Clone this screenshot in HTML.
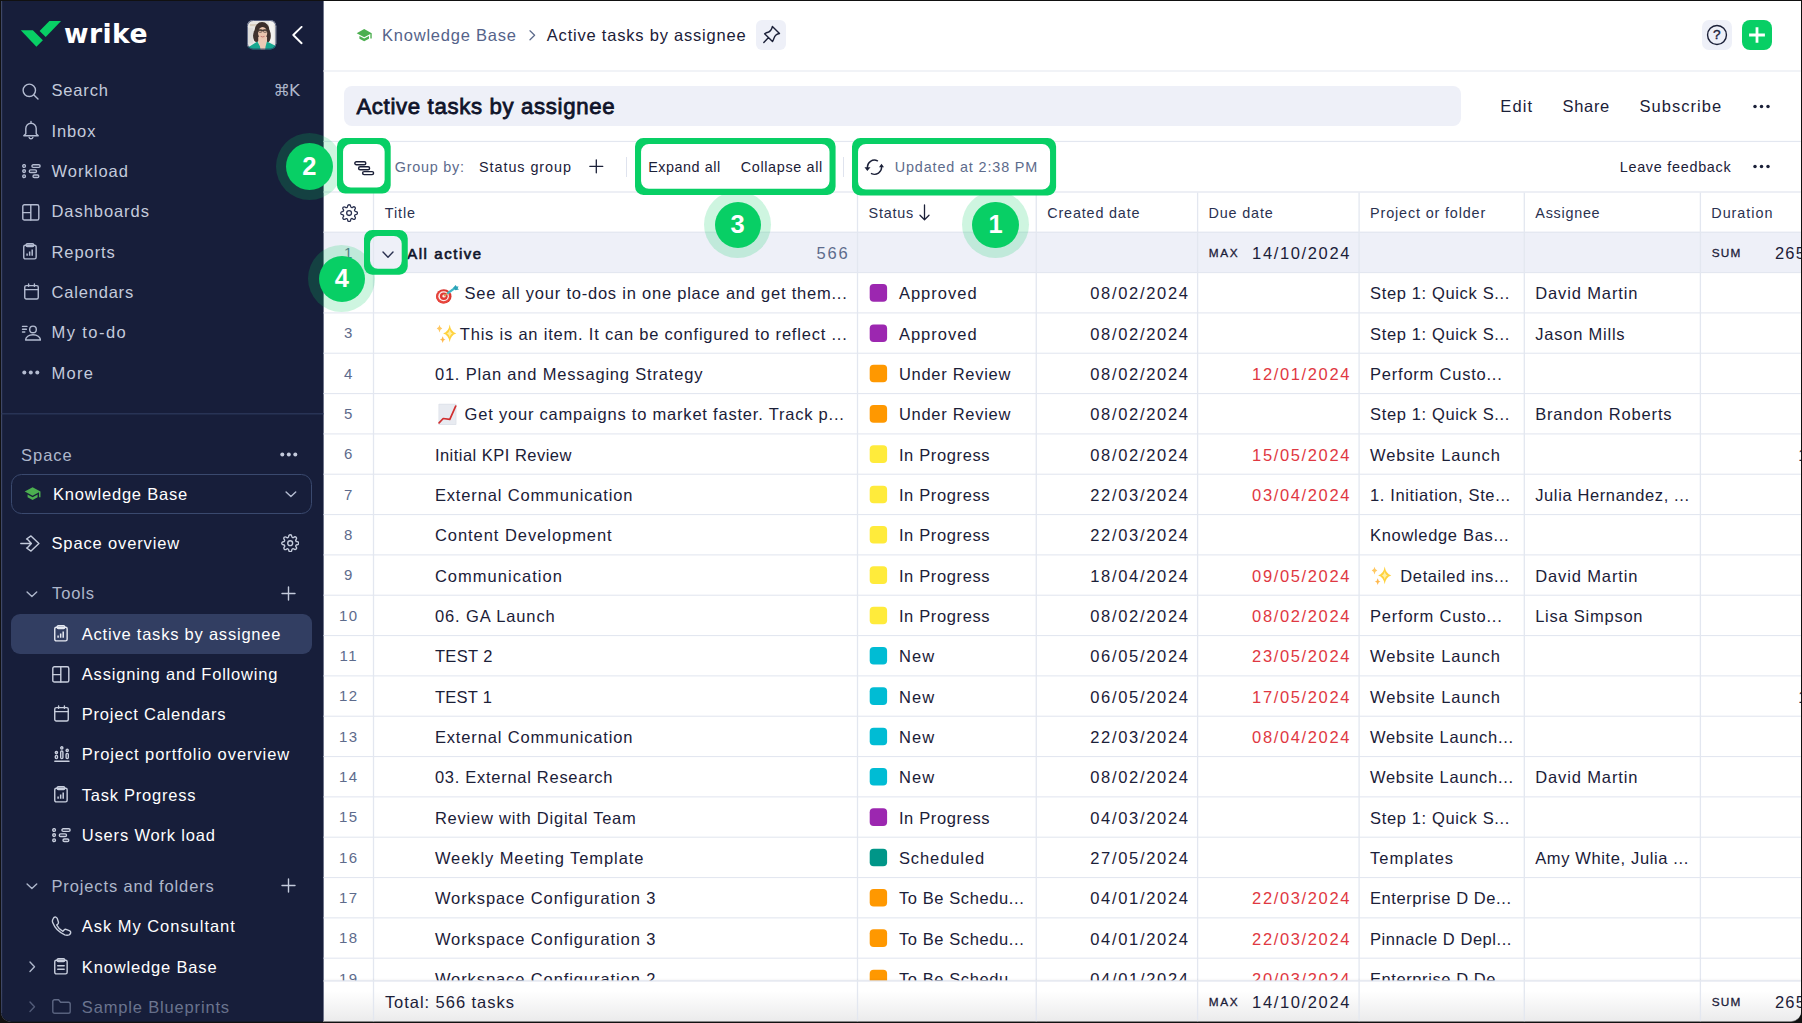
<!DOCTYPE html>
<html lang="en"><head><meta charset="utf-8"><title>Active tasks by assignee - Wrike</title>
<style>
html,body{margin:0;padding:0;background:#111;overflow:hidden}
body{width:1802px;height:1023px}
#app{width:1802px;height:1023px;position:relative;overflow:hidden;font-family:"Liberation Sans",sans-serif}
.b{position:absolute;display:block}
.t{position:absolute;display:block;white-space:pre;font-family:"Liberation Sans",sans-serif}
</style></head>
<body>
<div id="app">
<div class="b" style="left:0.00px;top:0.00px;width:1802.00px;height:1023.00px;background:#111;"></div>
<div class="b" style="left:1.20px;top:1.00px;width:1799.60px;height:1021.00px;background:#8a8a8b;border-radius:0 0 10px 10px;"></div>
<div class="b" style="left:1.20px;top:1.00px;width:1799.60px;height:1020.00px;background:#fff;border-radius:0 0 10px 10px;"></div>
<div class="b" style="left:1.20px;top:1.00px;width:322.30px;height:1021.00px;background:#141a2c;border-radius:0 0 0 10px;"></div>
<div class="b" style="left:1.20px;top:1.00px;width:322.30px;height:1020.00px;background:#171e3a;border-radius:0 0 0 10px;"></div>
<div class="b" style="left:323.00px;top:1.00px;width:1.00px;height:1020.00px;background:#70768b;"></div>
<div class="b" style="left:1.00px;top:1.00px;width:1.00px;height:1012.00px;background:#3e4766;"></div>
<div class="b" style="left:2.00px;top:1.00px;width:1.00px;height:1012.00px;background:#1d2542;"></div>
<svg class="b" style="left:20.00px;top:20.00px;" width="42" height="27" viewBox="0 0 42 27" fill="none"><path d="M0.800 10.200H12.900L22.900 20.200 16.400 26.700z" fill="#08cf65"/><path d="M29.400 1.100H41.100L25.700 17 19.600 10.900z" fill="#08cf65"/></svg>
<span id="t1" class="t" style="top:16.90px;height:34px;line-height:34px;font-size:26.6px;color:#fff;font-weight:700;left:63.90px;letter-spacing:0.454px;font-family:'DejaVu Sans','Liberation Sans',sans-serif;">wrike</span>
<svg class="b" style="left:247.4px;top:20.2px" width="29.300" height="29.500" viewBox="0 0 30 30"><defs><clipPath id="av"><rect x="0" y="0" width="30" height="30" rx="6.200"/></clipPath><filter id="avb" x="-5%" y="-5%" width="110%" height="110%"><feGaussianBlur stdDeviation="0.550"/></filter></defs><g clip-path="url(#av)"><g filter="url(#avb)"><rect x="-4" y="-4" width="38" height="42" fill="#e9e7e3"/><rect x="3" y="4" width="7" height="2.200" fill="#d9cfbf"/><rect x="21" y="5" width="7" height="2.200" fill="#d9cfbf"/><rect x="22.500" y="-1" width="5" height="24" fill="#f4f3f1"/><rect x="1" y="8" width="5" height="16" fill="#dddcda"/><ellipse cx="15.400" cy="10.500" rx="7.600" ry="8.600" fill="#3b2f2a"/><ellipse cx="9.800" cy="16" rx="3.600" ry="6.500" fill="#40332d"/><ellipse cx="21" cy="16" rx="3.400" ry="6.800" fill="#40332d"/><rect x="11.500" y="17" width="9" height="20" fill="#ecc9b4"/><ellipse cx="16" cy="13.200" rx="4.700" ry="6.200" fill="#ecc6ae"/><path d="M-3 37V29.500L3 26.800 10.600 22 13.300 27 14.800 37zM17.800 37 19 27 20.400 22 27 25.300 33 28V37z" fill="#12a78f"/><path d="M11.500 10.400h9.200" stroke="#3a302c" stroke-width="1.100"/><rect x="11.700" y="9.800" width="3.600" height="2.600" rx="0.800" stroke="#3a302c" stroke-width=".7" fill="none"/><rect x="16.700" y="9.800" width="3.600" height="2.600" rx="0.800" stroke="#3a302c" stroke-width=".7" fill="none"/><path d="M14 16.600q2 1.300 4 0" stroke="#c4736e" stroke-width=".9" fill="none"/></g></g><rect x="0.400" y="0.400" width="29.200" height="29.200" rx="6" fill="none" stroke="#2d3a63" stroke-width=".8"/></svg>
<svg class="b" style="left:291.00px;top:26.00px;" width="12" height="19" viewBox="0 0 12 19" fill="none"><path d="M10.600 0.900 2.300 9.050 10.600 17.200" stroke="#fff" stroke-width="1.900" stroke-linecap="round" stroke-linejoin="round"/></svg>
<svg class="b" style="left:21.50px;top:82.50px;" width="18" height="18" viewBox="0 0 18 18" fill="none"><circle cx="7.300" cy="7.300" r="6.200" stroke="#b4bcd1" stroke-width="1.4" stroke-linecap="round" stroke-linejoin="round"/><path d="M11.900 11.900 16 16" stroke="#b4bcd1" stroke-width="1.4" stroke-linecap="round" stroke-linejoin="round"/></svg>
<span id="t2" class="t" style="top:78.30px;height:24px;line-height:24px;font-size:16.5px;color:#c4cbdc;left:51.50px;letter-spacing:0.829px;">Search</span>
<svg class="b" style="left:22.00px;top:120.30px;" width="18" height="20" viewBox="0 0 18 20" fill="none"><path d="M9 1.400v1.300M3.800 13.800V8.400a5.200 5.200 0 0 1 10.400 0v5.400l2 2H1.800z" stroke="#b4bcd1" stroke-width="1.4" stroke-linecap="round" stroke-linejoin="round"/><path d="M7.100 17.400a2 2 0 0 0 3.800 0" stroke="#b4bcd1" stroke-width="1.4" stroke-linecap="round" stroke-linejoin="round"/></svg>
<span id="t3" class="t" style="top:118.63px;height:24px;line-height:24px;font-size:16.5px;color:#c4cbdc;left:51.50px;letter-spacing:0.888px;">Inbox</span>
<svg class="b" style="left:21.90px;top:163.50px;" width="19" height="15" viewBox="0 0 19 15" fill="none"><circle cx="2.100" cy="2" r="1.350" stroke="#b4bcd1" stroke-width="1.4" stroke-linecap="round" stroke-linejoin="round"/><circle cx="2.100" cy="7.100" r="1.350" stroke="#b4bcd1" stroke-width="1.4" stroke-linecap="round" stroke-linejoin="round"/><circle cx="2.100" cy="12.200" r="1.350" stroke="#b4bcd1" stroke-width="1.4" stroke-linecap="round" stroke-linejoin="round"/><rect x="9.900" y="0.750" width="8.200" height="2.600" rx="1.300" stroke="#b4bcd1" stroke-width="1.4" stroke-linecap="round" stroke-linejoin="round"/><rect x="7.300" y="5.850" width="7.200" height="2.600" rx="1.300" stroke="#b4bcd1" stroke-width="1.4" stroke-linecap="round" stroke-linejoin="round"/><rect x="11" y="10.950" width="5.800" height="2.600" rx="1.300" stroke="#b4bcd1" stroke-width="1.4" stroke-linecap="round" stroke-linejoin="round"/></svg>
<span id="t4" class="t" style="top:158.96px;height:24px;line-height:24px;font-size:16.5px;color:#c4cbdc;left:51.50px;letter-spacing:1.003px;">Workload</span>
<svg class="b" style="left:21.50px;top:203.70px;" width="18" height="17" viewBox="0 0 18 17" fill="none"><rect x="0.8" y="0.8" width="16" height="15.2" rx="1.6" stroke="#b4bcd1" stroke-width="1.4" stroke-linecap="round" stroke-linejoin="round"/><path d="M8.8 0.8V16M0.8 8.6H8.8" stroke="#b4bcd1" stroke-width="1.4" stroke-linecap="round" stroke-linejoin="round"/></svg>
<span id="t5" class="t" style="top:199.29px;height:24px;line-height:24px;font-size:16.5px;color:#c4cbdc;left:51.50px;letter-spacing:0.938px;">Dashboards</span>
<svg class="b" style="left:23.40px;top:243.00px;" width="15" height="18" viewBox="0 0 15 18" fill="none"><rect x="0.750" y="2.200" width="12.400" height="13.700" rx="1.600" stroke="#b4bcd1" stroke-width="1.4" stroke-linecap="round" stroke-linejoin="round"/><rect x="3.200" y="0.750" width="7.500" height="2.800" rx="1.100" stroke="#b4bcd1" stroke-width="1.4" stroke-linecap="round" stroke-linejoin="round"/><path d="M4.100 12.700V10.600M6.650 12.700V8.600M9.200 12.700V6.600" stroke="#b4bcd1" stroke-width="1.500"/></svg>
<span id="t6" class="t" style="top:239.62px;height:24px;line-height:24px;font-size:16.5px;color:#c4cbdc;left:51.50px;letter-spacing:0.924px;">Reports</span>
<svg class="b" style="left:23.50px;top:282.90px;" width="16" height="18" viewBox="0 0 16 18" fill="none"><rect x="0.750" y="2.600" width="13.500" height="13.400" rx="1.500" stroke="#b4bcd1" stroke-width="1.4" stroke-linecap="round" stroke-linejoin="round"/><path d="M0.750 6.600H14.250M4.600 0.900V3.300M10.400 0.900V3.300" stroke="#b4bcd1" stroke-width="1.4" stroke-linecap="round" stroke-linejoin="round"/></svg>
<span id="t7" class="t" style="top:279.95px;height:24px;line-height:24px;font-size:16.5px;color:#c4cbdc;left:51.50px;letter-spacing:0.807px;">Calendars</span>
<svg class="b" style="left:21.30px;top:324.60px;" width="20" height="16" viewBox="0 0 20 16" fill="none"><path d="M1.500 1.400H6M1.500 4.200H5.400M1.500 7H3.800" stroke="#b4bcd1" stroke-width="1.4" stroke-linecap="round" stroke-linejoin="round"/><circle cx="12" cy="4.4" r="3.3" stroke="#b4bcd1" stroke-width="1.4" stroke-linecap="round" stroke-linejoin="round"/><path d="M4.6 15c0-3 3.3-5.2 7.4-5.2s7.4 2.2 7.4 5.2z" stroke="#b4bcd1" stroke-width="1.4" stroke-linecap="round" stroke-linejoin="round"/></svg>
<span id="t8" class="t" style="top:320.28px;height:24px;line-height:24px;font-size:16.5px;color:#c4cbdc;left:51.50px;letter-spacing:1.427px;">My to-do</span>
<svg class="b" style="left:21.50px;top:369.70px;" width="18" height="5" viewBox="0 0 18 5" fill="none"><circle cx="2.3" cy="2.5" r="2" fill="#b4bcd1"/><circle cx="8.8" cy="2.5" r="2" fill="#b4bcd1"/><circle cx="15.3" cy="2.5" r="2" fill="#b4bcd1"/></svg>
<span id="t9" class="t" style="top:360.61px;height:24px;line-height:24px;font-size:16.5px;color:#c4cbdc;left:51.50px;letter-spacing:1.277px;">More</span>
<span id="t10" class="t" style="top:78.60px;height:24px;line-height:24px;font-size:16.5px;color:#aeb7cb;left:273.50px;letter-spacing:-0.903px;font-family:'DejaVu Sans','Liberation Sans',sans-serif;">⌘K</span>
<svg class="b" style="left:0;top:0" width="1802" height="1023" viewBox="0 0 1802 1023"><rect x="1.20" y="413.20" width="322.30" height="1.20" fill="#2d3a5d"/></svg>
<span id="t11" class="t" style="top:442.70px;height:24px;line-height:24px;font-size:16.5px;color:#aeb7cb;left:21.10px;letter-spacing:0.945px;">Space</span>
<svg class="b" style="left:280.00px;top:451.50px;" width="18" height="5" viewBox="0 0 18 5" fill="none"><circle cx="2.3" cy="2.5" r="2" fill="#c4cbdc"/><circle cx="8.8" cy="2.5" r="2" fill="#c4cbdc"/><circle cx="15.3" cy="2.5" r="2" fill="#c4cbdc"/></svg>
<div class="b" style="left:11px;top:474.1px;width:300.8px;height:39.6px;border:1px solid #3a496e;border-radius:10.5px;box-sizing:border-box"></div>
<svg class="b" style="left:23.90px;top:484.60px;" width="17.2" height="17.2" viewBox="0 0 24 24" fill="none"><path d="M5 13.200v4l7 3.800 7-3.800v-4l-7 3.800zM12 3 1 9l11 6 9-4.900V17h2V9z" fill="#4caf50"/></svg>
<span id="t12" class="t" style="top:481.90px;height:24px;line-height:24px;font-size:16.5px;color:#fff;left:53.00px;letter-spacing:0.799px;">Knowledge Base</span>
<svg class="b" style="left:284.70px;top:491.20px;" width="12" height="7" viewBox="0 0 12 7" fill="none"><path d="M1.100 0.900 5.900 5.500 10.700 0.900" stroke="#b4bcd1" stroke-width="1.4" stroke-linecap="round" stroke-linejoin="round"/></svg>
<svg class="b" style="left:20.30px;top:534.60px;" width="20" height="17" viewBox="0 0 20 17" fill="none"><path d="M0.8 8.5H11M7.6 4.6 11.4 8.5 7.6 12.4" stroke="#c4cbdc" stroke-width="1.4" stroke-linecap="round" stroke-linejoin="round"/><path d="M6.6 4 11 0.9 18.9 8.5 11 16.1 6.6 13" stroke="#c4cbdc" stroke-width="1.4" stroke-linecap="round" stroke-linejoin="round"/></svg>
<span id="t13" class="t" style="top:531.00px;height:24px;line-height:24px;font-size:16.5px;color:#fff;left:51.50px;letter-spacing:0.865px;">Space overview</span>
<svg class="b" style="left:280.80px;top:533.80px;" width="18.4" height="18.4" viewBox="0 0 24 24" fill="none"><circle cx="12" cy="12" r="3.200" stroke="#c4cbdc" stroke-width="1.8" stroke-linecap="round" stroke-linejoin="round"/><path d="M19.4 15a1.650 1.650 0 0 0 .33 1.820l.06.060a2 2 0 0 1 0 2.830 2 2 0 0 1-2.830 0l-.06-.060a1.650 1.650 0 0 0-1.820-.33 1.650 1.650 0 0 0-1 1.510V21a2 2 0 0 1-2 2 2 2 0 0 1-2-2v-.09A1.650 1.650 0 0 0 9 19.400a1.650 1.650 0 0 0-1.820.33l-.06.060a2 2 0 0 1-2.830 0 2 2 0 0 1 0-2.830l.06-.060a1.650 1.650 0 0 0 .33-1.820 1.650 1.650 0 0 0-1.510-1H3a2 2 0 0 1-2-2 2 2 0 0 1 2-2h.09A1.650 1.650 0 0 0 4.600 9a1.650 1.650 0 0 0-.33-1.820l-.06-.060a2 2 0 0 1 0-2.830 2 2 0 0 1 2.830 0l.06.060a1.650 1.650 0 0 0 1.820.33H9a1.650 1.650 0 0 0 1-1.510V3a2 2 0 0 1 2-2 2 2 0 0 1 2 2v.09a1.650 1.650 0 0 0 1 1.510 1.650 1.650 0 0 0 1.820-.33l.06-.060a2 2 0 0 1 2.830 0 2 2 0 0 1 0 2.830l-.06.060a1.650 1.650 0 0 0-.33 1.820V9a1.650 1.650 0 0 0 1.510 1H21a2 2 0 0 1 2 2 2 2 0 0 1-2 2h-.09a1.650 1.650 0 0 0-1.510 1z" stroke="#c4cbdc" stroke-width="1.8" stroke-linecap="round" stroke-linejoin="round"/></svg>
<svg class="b" style="left:25.60px;top:590.60px;" width="12" height="7" viewBox="0 0 12 7" fill="none"><path d="M1.100 0.900 5.900 5.500 10.700 0.900" stroke="#aeb7cb" stroke-width="1.4" stroke-linecap="round" stroke-linejoin="round"/></svg>
<span id="t14" class="t" style="top:581.20px;height:24px;line-height:24px;font-size:16.5px;color:#aeb7cb;left:52.00px;letter-spacing:0.886px;">Tools</span>
<svg class="b" style="left:281.00px;top:585.70px;" width="15" height="15" viewBox="0 0 15 15" fill="none"><path d="M7.500 1V14M1 7.500H14" stroke="#c4cbdc" stroke-width="1.4" stroke-linecap="round" stroke-linejoin="round"/></svg>
<div class="b" style="left:11.00px;top:613.75px;width:300.80px;height:40.00px;background:#323e62;border-radius:9px;"></div>
<svg class="b" style="left:54.10px;top:624.80px;" width="15" height="18" viewBox="0 0 15 18" fill="none"><rect x="0.750" y="2.200" width="12.400" height="13.700" rx="1.600" stroke="#e6e9f2" stroke-width="1.4" stroke-linecap="round" stroke-linejoin="round"/><rect x="3.200" y="0.750" width="7.500" height="2.800" rx="1.100" stroke="#e6e9f2" stroke-width="1.4" stroke-linecap="round" stroke-linejoin="round"/><path d="M4.100 12.700V10.600M6.650 12.700V8.600M9.200 12.700V6.600" stroke="#e6e9f2" stroke-width="1.500"/></svg>
<span id="t15" class="t" style="top:621.50px;height:24px;line-height:24px;font-size:16.5px;color:#fff;left:81.80px;letter-spacing:0.781px;">Active tasks by assignee</span>
<svg class="b" style="left:51.80px;top:665.53px;" width="18" height="17" viewBox="0 0 18 17" fill="none"><rect x="0.8" y="0.8" width="16" height="15.2" rx="1.6" stroke="#c9cfde" stroke-width="1.4" stroke-linecap="round" stroke-linejoin="round"/><path d="M8.8 0.8V16M0.8 8.6H8.8" stroke="#c9cfde" stroke-width="1.4" stroke-linecap="round" stroke-linejoin="round"/></svg>
<span id="t16" class="t" style="top:661.83px;height:24px;line-height:24px;font-size:16.5px;color:#fff;left:81.80px;letter-spacing:0.803px;">Assigning and Following</span>
<svg class="b" style="left:54.10px;top:705.16px;" width="16" height="18" viewBox="0 0 16 18" fill="none"><rect x="0.750" y="2.600" width="13.500" height="13.400" rx="1.500" stroke="#c9cfde" stroke-width="1.4" stroke-linecap="round" stroke-linejoin="round"/><path d="M0.750 6.600H14.250M4.600 0.900V3.300M10.400 0.900V3.300" stroke="#c9cfde" stroke-width="1.4" stroke-linecap="round" stroke-linejoin="round"/></svg>
<span id="t17" class="t" style="top:702.16px;height:24px;line-height:24px;font-size:16.5px;color:#fff;left:81.80px;letter-spacing:0.779px;">Project Calendars</span>
<svg class="b" style="left:54.00px;top:745.89px;" width="16" height="16" viewBox="0 0 16 16" fill="none"><circle cx="2.4" cy="6.6" r="1.1" stroke="#c9cfde" stroke-width="1.4" stroke-linecap="round" stroke-linejoin="round"/><circle cx="7.8" cy="1.9" r="1.1" stroke="#c9cfde" stroke-width="1.4" stroke-linecap="round" stroke-linejoin="round"/><circle cx="13.2" cy="4.4" r="1.1" stroke="#c9cfde" stroke-width="1.4" stroke-linecap="round" stroke-linejoin="round"/><rect x="1.3" y="9.4" width="2.2" height="3.2" rx="1" stroke="#c9cfde" stroke-width="1.4" stroke-linecap="round" stroke-linejoin="round"/><rect x="6.7" y="5" width="2.2" height="7.6" rx="1" stroke="#c9cfde" stroke-width="1.4" stroke-linecap="round" stroke-linejoin="round"/><rect x="12.1" y="7.4" width="2.2" height="5.2" rx="1" stroke="#c9cfde" stroke-width="1.4" stroke-linecap="round" stroke-linejoin="round"/><path d="M0.8 15.2H15" stroke="#c9cfde" stroke-width="1.4" stroke-linecap="round" stroke-linejoin="round"/></svg>
<span id="t18" class="t" style="top:742.49px;height:24px;line-height:24px;font-size:16.5px;color:#fff;left:81.80px;letter-spacing:0.922px;">Project portfolio overview</span>
<svg class="b" style="left:54.10px;top:786.12px;" width="15" height="18" viewBox="0 0 15 18" fill="none"><rect x="0.750" y="2.200" width="12.400" height="13.700" rx="1.600" stroke="#c9cfde" stroke-width="1.4" stroke-linecap="round" stroke-linejoin="round"/><rect x="3.200" y="0.750" width="7.500" height="2.800" rx="1.100" stroke="#c9cfde" stroke-width="1.4" stroke-linecap="round" stroke-linejoin="round"/><path d="M4.100 12.700V10.600M6.650 12.700V8.600M9.200 12.700V6.600" stroke="#c9cfde" stroke-width="1.500"/></svg>
<span id="t19" class="t" style="top:782.82px;height:24px;line-height:24px;font-size:16.5px;color:#fff;left:81.80px;letter-spacing:0.757px;">Task Progress</span>
<svg class="b" style="left:52.10px;top:827.80px;" width="19" height="15" viewBox="0 0 19 15" fill="none"><circle cx="2.100" cy="2" r="1.350" stroke="#c9cfde" stroke-width="1.4" stroke-linecap="round" stroke-linejoin="round"/><circle cx="2.100" cy="7.100" r="1.350" stroke="#c9cfde" stroke-width="1.4" stroke-linecap="round" stroke-linejoin="round"/><circle cx="2.100" cy="12.200" r="1.350" stroke="#c9cfde" stroke-width="1.4" stroke-linecap="round" stroke-linejoin="round"/><rect x="9.900" y="0.750" width="8.200" height="2.600" rx="1.300" stroke="#c9cfde" stroke-width="1.4" stroke-linecap="round" stroke-linejoin="round"/><rect x="7.300" y="5.850" width="7.200" height="2.600" rx="1.300" stroke="#c9cfde" stroke-width="1.4" stroke-linecap="round" stroke-linejoin="round"/><rect x="11" y="10.950" width="5.800" height="2.600" rx="1.300" stroke="#c9cfde" stroke-width="1.4" stroke-linecap="round" stroke-linejoin="round"/></svg>
<span id="t20" class="t" style="top:823.15px;height:24px;line-height:24px;font-size:16.5px;color:#fff;left:81.80px;letter-spacing:0.819px;">Users Work load</span>
<svg class="b" style="left:25.60px;top:883.00px;" width="12" height="7" viewBox="0 0 12 7" fill="none"><path d="M1.100 0.900 5.900 5.500 10.700 0.900" stroke="#aeb7cb" stroke-width="1.4" stroke-linecap="round" stroke-linejoin="round"/></svg>
<span id="t21" class="t" style="top:873.50px;height:24px;line-height:24px;font-size:16.5px;color:#aeb7cb;left:51.50px;letter-spacing:0.868px;">Projects and folders</span>
<svg class="b" style="left:281.00px;top:877.90px;" width="15" height="15" viewBox="0 0 15 15" fill="none"><path d="M7.500 1V14M1 7.500H14" stroke="#c4cbdc" stroke-width="1.4" stroke-linecap="round" stroke-linejoin="round"/></svg>
<svg class="b" style="left:50.70px;top:915.50px;" width="22" height="21" viewBox="0 0 22 21" fill="none"><path d="M2.2 2.6c.5-1 1.6-1.7 2.6-1.5.7.2 1.2.8 1.5 1.500l1.100 3.400c.2.700 0 1.400-.5 1.900l-1.200 1.100c1.300 2.700 3.400 4.900 6.200 6.300l1.200-1.400c.5-.5 1.200-.700 1.900-.5l3.300 1.200c.8.300 1.300.9 1.400 1.600.2 1.100-.6 2.100-1.600 2.600-1.300.6-2.800.5-4.300 0C8.400 16.600 3.600 11.600 1.700 6.600 1.200 5.200 1.400 3.800 2.200 2.600z" stroke="#c9cfde" stroke-width="1.4" stroke-linecap="round" stroke-linejoin="round"/></svg>
<span id="t22" class="t" style="top:913.90px;height:24px;line-height:24px;font-size:16.5px;color:#fff;left:81.80px;letter-spacing:0.966px;">Ask My Consultant</span>
<svg class="b" style="left:29.00px;top:960.80px;" width="7" height="12" viewBox="0 0 7 12" fill="none"><path d="M1 1.100 5.500 5.800 1 10.500" stroke="#aeb7cb" stroke-width="1.4" stroke-linecap="round" stroke-linejoin="round"/></svg>
<svg class="b" style="left:54.10px;top:957.80px;" width="15" height="18" viewBox="0 0 15 18" fill="none"><rect x="0.750" y="2.200" width="12.400" height="13.700" rx="1.600" stroke="#c9cfde" stroke-width="1.4" stroke-linecap="round" stroke-linejoin="round"/><rect x="3.200" y="0.750" width="7.500" height="2.800" rx="1.100" stroke="#c9cfde" stroke-width="1.4" stroke-linecap="round" stroke-linejoin="round"/><path d="M3.700 7.800H10.200M3.700 11.300H10.200" stroke="#c9cfde" stroke-width="1.4" stroke-linecap="round" stroke-linejoin="round"/></svg>
<span id="t23" class="t" style="top:954.50px;height:24px;line-height:24px;font-size:16.5px;color:#fff;left:81.80px;letter-spacing:0.845px;">Knowledge Base</span>
<svg class="b" style="left:29.00px;top:1001.00px;" width="7" height="12" viewBox="0 0 7 12" fill="none"><path d="M1 1.100 5.500 5.800 1 10.500" stroke="#5f6986" stroke-width="1.4" stroke-linecap="round" stroke-linejoin="round"/></svg>
<svg class="b" style="left:52.30px;top:999.30px;" width="19" height="15" viewBox="0 0 19 15" fill="none"><path d="M0.8 2.600c0-1 .8-1.800 1.800-1.800h4l2 2.400h7.800c1 0 1.800.8 1.800 1.800v7.400c0 1-.8 1.800-1.800 1.800H2.600c-1 0-1.800-.8-1.800-1.800z" stroke="#6b7591" stroke-width="1.4" stroke-linecap="round" stroke-linejoin="round"/></svg>
<span id="t24" class="t" style="top:994.80px;height:24px;line-height:24px;font-size:16.5px;color:#7d87a1;left:81.80px;letter-spacing:0.839px;">Sample Blueprints</span>
<div class="b" style="left:1.2px;top:985px;width:322.3px;height:36px;background:linear-gradient(rgba(23,30,58,0),rgba(23,30,58,.3));border-radius:0 0 0 10px"></div>
<svg class="b" style="left:356.00px;top:26.70px;" width="16.4" height="16.4" viewBox="0 0 24 24" fill="none"><path d="M5 13.200v4l7 3.800 7-3.800v-4l-7 3.800zM12 3 1 9l11 6 9-4.900V17h2V9z" fill="#4caf50"/></svg>
<span id="t25" class="t" style="top:23.30px;height:24px;line-height:24px;font-size:16.5px;color:#55638a;left:382.00px;letter-spacing:0.783px;">Knowledge Base</span>
<svg class="b" style="left:529.30px;top:30.20px;" width="8" height="12" viewBox="0 0 8 12" fill="none"><path d="M1 0.800 5.600 5.300 1 9.800" stroke="#5d6b8c" stroke-width="1.25" stroke-linecap="round" stroke-linejoin="round"/></svg>
<span id="t26" class="t" style="top:23.30px;height:24px;line-height:24px;font-size:16.5px;color:#1b2038;left:546.80px;letter-spacing:0.789px;">Active tasks by assignee</span>
<div class="b" style="left:756.00px;top:20.00px;width:30.00px;height:30.00px;background:#eef0f8;border-radius:6px;"></div>
<svg class="b" style="left:761.00px;top:24.00px;" width="20" height="20" viewBox="0 0 20 20" fill="none"><path d="M11.400 2.500 18.500 9.500Q14.200 10.200 13 14.200 12.600 16 11.500 17.500L3.600 9.750Q5.500 8.600 7 8.300 10.300 7.200 11.400 2.500ZM7.300 13.700 2.800 18.400" stroke="#1b2038" stroke-width="1.4" stroke-linecap="round" stroke-linejoin="round"/></svg>
<div class="b" style="left:1701.75px;top:20.00px;width:30.00px;height:30.00px;background:#eef0f8;border-radius:7px;"></div>
<svg class="b" style="left:1705.60px;top:24.00px;" width="22" height="22" viewBox="0 0 22 22" fill="none"><circle cx="11" cy="11" r="9.450" stroke="#1b2038" stroke-width="1.400"/></svg>
<span id="t27" class="t" style="top:23.30px;height:24px;line-height:24px;font-size:13.6px;color:#1b2038;left:1712.90px;-webkit-text-stroke:0.4px #1b2038;">?</span>
<div class="b" style="left:1742.00px;top:20.00px;width:30.00px;height:30.00px;background:#08cf65;border-radius:8px;"></div>
<svg class="b" style="left:1748.90px;top:27.00px;" width="16" height="16" viewBox="0 0 16 16" fill="none"><path d="M8 0.250V15.750M0.100 8H15.900" stroke="#fff" stroke-width="2.800" stroke-linecap="butt"/></svg>
<svg class="b" style="left:0;top:0" width="1802" height="1023" viewBox="0 0 1802 1023"><rect x="323.50" y="70.20" width="1477.30" height="1.60" fill="#eef0f6"/></svg>
<div class="b" style="left:344.00px;top:86.00px;width:1116.60px;height:39.80px;background:#eef0f8;border-radius:8px;"></div>
<span id="t28" class="t" style="top:92.40px;height:30px;line-height:30px;font-size:22.2px;color:#10142a;left:356.40px;letter-spacing:0.659px;-webkit-text-stroke:0.8px #10142a;">Active tasks by assignee</span>
<span id="t29" class="t" style="top:94.30px;height:24px;line-height:24px;font-size:16.5px;color:#1b2038;left:1500.20px;letter-spacing:1.196px;">Edit</span>
<span id="t30" class="t" style="top:94.30px;height:24px;line-height:24px;font-size:16.5px;color:#1b2038;left:1562.60px;letter-spacing:0.648px;">Share</span>
<span id="t31" class="t" style="top:94.30px;height:24px;line-height:24px;font-size:16.5px;color:#1b2038;left:1639.60px;letter-spacing:1.019px;">Subscribe</span>
<svg class="b" style="left:1752.60px;top:103.80px;" width="17" height="5" viewBox="0 0 17 5" fill="none"><circle cx="2" cy="2.500" r="1.750" fill="#1b2038"/><circle cx="8.500" cy="2.500" r="1.750" fill="#1b2038"/><circle cx="15" cy="2.500" r="1.750" fill="#1b2038"/></svg>
<svg class="b" style="left:0;top:0" width="1802" height="1023" viewBox="0 0 1802 1023"><rect x="323.50" y="140.85" width="1477.30" height="1.20" fill="#e3e7f0"/><rect x="323.50" y="191.35" width="1477.30" height="1.30" fill="#e3e7f0"/></svg>
<svg class="b" style="left:353.60px;top:161.10px;" width="21" height="16" viewBox="0 0 21 16" fill="none"><rect x="0.800" y="0.800" width="11" height="3" rx="1.500" stroke="#1b2038" stroke-width="1.4" stroke-linecap="round" stroke-linejoin="round"/><rect x="4.600" y="5.700" width="11" height="3" rx="1.500" stroke="#1b2038" stroke-width="1.4" stroke-linecap="round" stroke-linejoin="round"/><rect x="8.600" y="10.600" width="11" height="3" rx="1.500" stroke="#1b2038" stroke-width="1.4" stroke-linecap="round" stroke-linejoin="round"/></svg>
<span id="t32" class="t" style="top:154.80px;height:24px;line-height:24px;font-size:14.4px;color:#5d6b8c;left:394.70px;letter-spacing:0.765px;">Group by:</span>
<span id="t33" class="t" style="top:154.80px;height:24px;line-height:24px;font-size:14.4px;color:#1b2038;left:479.10px;letter-spacing:0.928px;">Status group</span>
<svg class="b" style="left:588.50px;top:159.40px;" width="15" height="15" viewBox="0 0 15 15" fill="none"><path d="M7.300 0.800V13.800M0.800 7.300H13.800" stroke="#1b2038" stroke-width="1.3" stroke-linecap="round" stroke-linejoin="round"/></svg>
<div class="b" style="left:626.00px;top:157.40px;width:1.20px;height:20.00px;background:#dfe3ee;"></div>
<span id="t34" class="t" style="top:154.80px;height:24px;line-height:24px;font-size:14.4px;color:#1b2038;left:648.20px;letter-spacing:0.522px;">Expand all</span>
<span id="t35" class="t" style="top:154.80px;height:24px;line-height:24px;font-size:14.4px;color:#1b2038;left:740.70px;letter-spacing:0.656px;">Collapse all</span>
<div class="b" style="left:842.60px;top:157.40px;width:1.20px;height:20.00px;background:#dfe3ee;"></div>
<svg class="b" style="left:863.00px;top:158.00px;" width="23" height="18" viewBox="0 0 23 18" fill="none"><path d="M14.500 2.800A7.100 7.100 0 0 0 4.400 9.600M8.500 15.600A7.100 7.100 0 0 0 18.600 8.800" stroke="#1b2038" stroke-width="1.4" stroke-linecap="round" stroke-linejoin="round"/><path d="M1.500 9.200H7.500L4.300 13zM16 9.250H21L18.500 5.750z" fill="#1b2038"/></svg>
<span id="t36" class="t" style="top:154.80px;height:24px;line-height:24px;font-size:14.4px;color:#5d6b8c;left:894.70px;letter-spacing:0.860px;">Updated at 2:38 PM</span>
<span id="t37" class="t" style="top:154.80px;height:24px;line-height:24px;font-size:14.4px;color:#1b2038;left:1619.70px;letter-spacing:0.723px;">Leave feedback</span>
<svg class="b" style="left:1752.80px;top:164.30px;" width="17" height="5" viewBox="0 0 17 5" fill="none"><circle cx="2" cy="2.500" r="1.750" fill="#1b2038"/><circle cx="8.500" cy="2.500" r="1.750" fill="#1b2038"/><circle cx="15" cy="2.500" r="1.750" fill="#1b2038"/></svg>
<svg class="b" style="left:340.00px;top:203.90px;" width="18.2" height="18.2" viewBox="0 0 24 24" fill="none"><circle cx="12" cy="12" r="3.200" stroke="#2a3150" stroke-width="1.7" stroke-linecap="round" stroke-linejoin="round"/><path d="M19.4 15a1.650 1.650 0 0 0 .33 1.820l.06.060a2 2 0 0 1 0 2.830 2 2 0 0 1-2.830 0l-.06-.060a1.650 1.650 0 0 0-1.820-.33 1.650 1.650 0 0 0-1 1.510V21a2 2 0 0 1-2 2 2 2 0 0 1-2-2v-.09A1.650 1.650 0 0 0 9 19.400a1.650 1.650 0 0 0-1.820.33l-.06.060a2 2 0 0 1-2.830 0 2 2 0 0 1 0-2.830l.06-.060a1.650 1.650 0 0 0 .33-1.820 1.650 1.650 0 0 0-1.510-1H3a2 2 0 0 1-2-2 2 2 0 0 1 2-2h.09A1.650 1.650 0 0 0 4.600 9a1.650 1.650 0 0 0-.33-1.820l-.06-.060a2 2 0 0 1 0-2.830 2 2 0 0 1 2.830 0l.06.060a1.650 1.650 0 0 0 1.820.33H9a1.650 1.650 0 0 0 1-1.510V3a2 2 0 0 1 2-2 2 2 0 0 1 2 2v.09a1.650 1.650 0 0 0 1 1.510 1.650 1.650 0 0 0 1.820-.33l.06-.060a2 2 0 0 1 2.830 0 2 2 0 0 1 0 2.830l-.06.060a1.650 1.650 0 0 0-.33 1.820V9a1.650 1.650 0 0 0 1.510 1H21a2 2 0 0 1 2 2 2 2 0 0 1-2 2h-.09a1.650 1.650 0 0 0-1.510 1z" stroke="#2a3150" stroke-width="1.7" stroke-linecap="round" stroke-linejoin="round"/></svg>
<span id="t38" class="t" style="top:200.60px;height:24px;line-height:24px;font-size:14.4px;color:#2a3150;left:384.80px;letter-spacing:0.891px;">Title</span>
<span id="t39" class="t" style="top:200.60px;height:24px;line-height:24px;font-size:14.4px;color:#2a3150;left:868.50px;letter-spacing:0.781px;">Status</span>
<svg class="b" style="left:918.60px;top:203.70px;" width="11" height="17" viewBox="0 0 11 17" fill="none"><path d="M5.500 1V15.500M1 11.200 5.500 15.700 10 11.200" stroke="#1b2038" stroke-width="1.3" stroke-linecap="round" stroke-linejoin="round"/></svg>
<span id="t40" class="t" style="top:200.60px;height:24px;line-height:24px;font-size:14.4px;color:#2a3150;left:1047.30px;letter-spacing:0.820px;">Created date</span>
<span id="t41" class="t" style="top:200.60px;height:24px;line-height:24px;font-size:14.4px;color:#2a3150;left:1208.50px;letter-spacing:0.831px;">Due date</span>
<span id="t42" class="t" style="top:200.60px;height:24px;line-height:24px;font-size:14.4px;color:#2a3150;left:1370.10px;letter-spacing:0.846px;">Project or folder</span>
<span id="t43" class="t" style="top:200.60px;height:24px;line-height:24px;font-size:14.4px;color:#2a3150;left:1535.30px;letter-spacing:0.731px;">Assignee</span>
<span id="t44" class="t" style="top:200.60px;height:24px;line-height:24px;font-size:14.4px;color:#2a3150;left:1711.30px;letter-spacing:0.959px;">Duration</span>
<div class="b" style="left:323.50px;top:232.25px;width:1477.30px;height:40.33px;background:#eef0f8;"></div>
<div class="b" style="left:0;top:0;width:1802px;height:980.5px;overflow:hidden">
<span id="t45" class="t" style="top:280.94px;height:24px;line-height:24px;font-size:15px;color:#5d6b8c;left:0.50px;left:323.6px;width:49px;text-align:center;">2</span>
<svg class="b" role="img" aria-label="🎯" style="left:435.00px;top:283.75px;" width="25" height="21" viewBox="0 0 25 21" fill="none"><ellipse cx="8.800" cy="12.400" rx="7.700" ry="7.200" fill="#d9352f"/><ellipse cx="8.200" cy="12.900" rx="7" ry="6.500" fill="#e8453c"/><ellipse cx="8.600" cy="12.300" rx="5.300" ry="5" fill="#fbeeee"/><ellipse cx="8.800" cy="12.200" rx="3.900" ry="3.700" fill="#e03a33"/><ellipse cx="9" cy="12" rx="1.700" ry="1.600" fill="#fff3f0"/><path d="M9.300 11.700 13.600 8.600" stroke="#c9a05a" stroke-width="1.300" stroke-linecap="round"/><path d="M13.200 8.900 19.800 4.100" stroke="#3fb6c6" stroke-width="2.300" stroke-linecap="round"/><path d="M18.200 3.800 20.600 0.900 21.600 2.600 23.600 2.400 22.600 4.300 24 5.600 20.400 6.300z" fill="#2aa3b8"/></svg>
<span id="t46" class="t" style="top:281.25px;height:24px;line-height:24px;font-size:16.5px;color:#1b2038;left:464.60px;letter-spacing:0.775px;">See all your to-dos in one place and get them...</span>
<span id="t47" class="t" style="top:281.25px;height:24px;line-height:24px;font-size:16.5px;color:#1b2038;left:898.90px;letter-spacing:1.026px;">Approved</span>
<span id="t48" class="t" style="top:281.25px;height:24px;line-height:24px;font-size:16.5px;color:#1b2038;right:612.31px;letter-spacing:1.692px;">08/02/2024</span>
<span id="t49" class="t" style="top:281.25px;height:24px;line-height:24px;font-size:16.5px;color:#1b2038;left:1370.00px;letter-spacing:0.643px;">Step 1: Quick S...</span>
<span id="t50" class="t" style="top:281.25px;height:24px;line-height:24px;font-size:16.5px;color:#1b2038;left:1535.20px;letter-spacing:0.882px;">David Martin</span>
<span id="t51" class="t" style="top:321.27px;height:24px;line-height:24px;font-size:15px;color:#5d6b8c;left:0.50px;left:323.6px;width:49px;text-align:center;">3</span>
<svg class="b" role="img" aria-label="✨" style="left:435.00px;top:323.07px;" width="23" height="20" viewBox="0 0 23 20" fill="none"><path d="M14.70 1.60Q15.76 8.99 21.30 10.40Q15.76 11.81 14.70 19.20Q13.64 11.81 8.10 10.40Q13.64 8.99 14.70 1.60z" fill="#ffd23f"/><path d="M14.70 6.20Q15.18 9.73 17.70 10.40Q15.18 11.07 14.70 14.60Q14.22 11.07 11.70 10.40Q14.22 9.73 14.70 6.20z" fill="#fff0a8"/><path d="M4.50 1.80Q4.95 4.99 7.30 5.60Q4.95 6.21 4.50 9.40Q4.05 6.21 1.70 5.60Q4.05 4.99 4.50 1.80z" fill="#ffc861"/><path d="M7.70 13.20Q8.15 16.06 10.50 16.60Q8.15 17.14 7.70 20.00Q7.25 17.14 4.90 16.60Q7.25 16.06 7.70 13.20z" fill="#ffb84d"/></svg>
<span id="t52" class="t" style="top:321.57px;height:24px;line-height:24px;font-size:16.5px;color:#1b2038;left:459.80px;letter-spacing:0.791px;">This is an item. It can be configured to reflect ...</span>
<span id="t53" class="t" style="top:321.57px;height:24px;line-height:24px;font-size:16.5px;color:#1b2038;left:898.90px;letter-spacing:1.026px;">Approved</span>
<span id="t54" class="t" style="top:321.57px;height:24px;line-height:24px;font-size:16.5px;color:#1b2038;right:612.31px;letter-spacing:1.692px;">08/02/2024</span>
<span id="t55" class="t" style="top:321.57px;height:24px;line-height:24px;font-size:16.5px;color:#1b2038;left:1370.00px;letter-spacing:0.643px;">Step 1: Quick S...</span>
<span id="t56" class="t" style="top:321.57px;height:24px;line-height:24px;font-size:16.5px;color:#1b2038;left:1535.20px;letter-spacing:0.782px;">Jason Mills</span>
<span id="t57" class="t" style="top:361.60px;height:24px;line-height:24px;font-size:15px;color:#5d6b8c;left:0.50px;left:323.6px;width:49px;text-align:center;">4</span>
<span id="t58" class="t" style="top:361.90px;height:24px;line-height:24px;font-size:16.5px;color:#1b2038;left:434.90px;letter-spacing:0.815px;">01. Plan and Messaging Strategy</span>
<span id="t59" class="t" style="top:361.90px;height:24px;line-height:24px;font-size:16.5px;color:#1b2038;left:898.90px;letter-spacing:0.718px;">Under Review</span>
<span id="t60" class="t" style="top:361.90px;height:24px;line-height:24px;font-size:16.5px;color:#1b2038;right:612.31px;letter-spacing:1.692px;">08/02/2024</span>
<span id="t61" class="t" style="top:361.90px;height:24px;line-height:24px;font-size:16.5px;color:#df3842;right:450.96px;letter-spacing:1.637px;">12/01/2024</span>
<span id="t62" class="t" style="top:361.90px;height:24px;line-height:24px;font-size:16.5px;color:#1b2038;left:1370.00px;letter-spacing:0.780px;">Perform Custo...</span>
<span id="t63" class="t" style="top:401.94px;height:24px;line-height:24px;font-size:15px;color:#5d6b8c;left:0.50px;left:323.6px;width:49px;text-align:center;">5</span>
<svg class="b" role="img" aria-label="📈" style="left:437.50px;top:402.74px;" width="19" height="23" viewBox="0 0 19 23" fill="none"><rect x="0.500" y="0.800" width="17.900" height="21.300" rx="0.800" fill="#dde1e9"/><rect x="1.300" y="1.600" width="16.300" height="19.700" fill="#e8ebf1"/><path d="M1.100 19.900 5.200 15.500 11.800 16.300 17.700 3.100" stroke="#d12f2f" stroke-width="1.700" fill="none" stroke-linejoin="round" stroke-linecap="round"/></svg>
<span id="t64" class="t" style="top:402.24px;height:24px;line-height:24px;font-size:16.5px;color:#1b2038;left:464.60px;letter-spacing:0.790px;">Get your campaigns to market faster. Track p...</span>
<span id="t65" class="t" style="top:402.24px;height:24px;line-height:24px;font-size:16.5px;color:#1b2038;left:898.90px;letter-spacing:0.718px;">Under Review</span>
<span id="t66" class="t" style="top:402.24px;height:24px;line-height:24px;font-size:16.5px;color:#1b2038;right:612.31px;letter-spacing:1.692px;">08/02/2024</span>
<span id="t67" class="t" style="top:402.24px;height:24px;line-height:24px;font-size:16.5px;color:#1b2038;left:1370.00px;letter-spacing:0.643px;">Step 1: Quick S...</span>
<span id="t68" class="t" style="top:402.24px;height:24px;line-height:24px;font-size:16.5px;color:#1b2038;left:1535.20px;letter-spacing:0.834px;">Brandon Roberts</span>
<span id="t69" class="t" style="top:442.26px;height:24px;line-height:24px;font-size:15px;color:#5d6b8c;left:0.50px;left:323.6px;width:49px;text-align:center;">6</span>
<span id="t70" class="t" style="top:442.56px;height:24px;line-height:24px;font-size:16.5px;color:#1b2038;left:434.90px;letter-spacing:0.478px;">Initial KPI Review</span>
<span id="t71" class="t" style="top:442.56px;height:24px;line-height:24px;font-size:16.5px;color:#1b2038;left:898.90px;letter-spacing:0.635px;">In Progress</span>
<span id="t72" class="t" style="top:442.56px;height:24px;line-height:24px;font-size:16.5px;color:#1b2038;right:612.31px;letter-spacing:1.692px;">08/02/2024</span>
<span id="t73" class="t" style="top:442.56px;height:24px;line-height:24px;font-size:16.5px;color:#df3842;right:450.96px;letter-spacing:1.637px;">15/05/2024</span>
<span id="t74" class="t" style="top:442.56px;height:24px;line-height:24px;font-size:16.5px;color:#1b2038;left:1370.00px;letter-spacing:0.907px;">Website Launch</span>
<span id="t75" class="t" style="top:482.59px;height:24px;line-height:24px;font-size:15px;color:#5d6b8c;left:0.50px;left:323.6px;width:49px;text-align:center;">7</span>
<span id="t76" class="t" style="top:482.89px;height:24px;line-height:24px;font-size:16.5px;color:#1b2038;left:434.90px;letter-spacing:0.851px;">External Communication</span>
<span id="t77" class="t" style="top:482.89px;height:24px;line-height:24px;font-size:16.5px;color:#1b2038;left:898.90px;letter-spacing:0.635px;">In Progress</span>
<span id="t78" class="t" style="top:482.89px;height:24px;line-height:24px;font-size:16.5px;color:#1b2038;right:612.31px;letter-spacing:1.692px;">22/03/2024</span>
<span id="t79" class="t" style="top:482.89px;height:24px;line-height:24px;font-size:16.5px;color:#df3842;right:450.96px;letter-spacing:1.637px;">03/04/2024</span>
<span id="t80" class="t" style="top:482.89px;height:24px;line-height:24px;font-size:16.5px;color:#1b2038;left:1370.00px;letter-spacing:0.636px;">1. Initiation, Ste...</span>
<span id="t81" class="t" style="top:482.89px;height:24px;line-height:24px;font-size:16.5px;color:#1b2038;left:1535.20px;letter-spacing:0.619px;">Julia Hernandez, ...</span>
<span id="t82" class="t" style="top:522.92px;height:24px;line-height:24px;font-size:15px;color:#5d6b8c;left:0.50px;left:323.6px;width:49px;text-align:center;">8</span>
<span id="t83" class="t" style="top:523.22px;height:24px;line-height:24px;font-size:16.5px;color:#1b2038;left:434.90px;letter-spacing:0.956px;">Content Development</span>
<span id="t84" class="t" style="top:523.22px;height:24px;line-height:24px;font-size:16.5px;color:#1b2038;left:898.90px;letter-spacing:0.635px;">In Progress</span>
<span id="t85" class="t" style="top:523.22px;height:24px;line-height:24px;font-size:16.5px;color:#1b2038;right:612.31px;letter-spacing:1.692px;">22/03/2024</span>
<span id="t86" class="t" style="top:523.22px;height:24px;line-height:24px;font-size:16.5px;color:#1b2038;left:1370.00px;letter-spacing:0.674px;">Knowledge Bas...</span>
<span id="t87" class="t" style="top:563.26px;height:24px;line-height:24px;font-size:15px;color:#5d6b8c;left:0.50px;left:323.6px;width:49px;text-align:center;">9</span>
<span id="t88" class="t" style="top:563.56px;height:24px;line-height:24px;font-size:16.5px;color:#1b2038;left:434.90px;letter-spacing:1.024px;">Communication</span>
<span id="t89" class="t" style="top:563.56px;height:24px;line-height:24px;font-size:16.5px;color:#1b2038;left:898.90px;letter-spacing:0.635px;">In Progress</span>
<span id="t90" class="t" style="top:563.56px;height:24px;line-height:24px;font-size:16.5px;color:#1b2038;right:612.31px;letter-spacing:1.692px;">18/04/2024</span>
<span id="t91" class="t" style="top:563.56px;height:24px;line-height:24px;font-size:16.5px;color:#df3842;right:450.96px;letter-spacing:1.637px;">09/05/2024</span>
<svg class="b" role="img" aria-label="✨" style="left:1369.50px;top:565.06px;" width="23" height="20" viewBox="0 0 23 20" fill="none"><path d="M14.70 1.60Q15.76 8.99 21.30 10.40Q15.76 11.81 14.70 19.20Q13.64 11.81 8.10 10.40Q13.64 8.99 14.70 1.60z" fill="#ffd23f"/><path d="M14.70 6.20Q15.18 9.73 17.70 10.40Q15.18 11.07 14.70 14.60Q14.22 11.07 11.70 10.40Q14.22 9.73 14.70 6.20z" fill="#fff0a8"/><path d="M4.50 1.80Q4.95 4.99 7.30 5.60Q4.95 6.21 4.50 9.40Q4.05 6.21 1.70 5.60Q4.05 4.99 4.50 1.80z" fill="#ffc861"/><path d="M7.70 13.20Q8.15 16.06 10.50 16.60Q8.15 17.14 7.70 20.00Q7.25 17.14 4.90 16.60Q7.25 16.06 7.70 13.20z" fill="#ffb84d"/></svg>
<span id="t92" class="t" style="top:563.56px;height:24px;line-height:24px;font-size:16.5px;color:#1b2038;left:1400.30px;letter-spacing:0.618px;">Detailed ins...</span>
<span id="t93" class="t" style="top:563.56px;height:24px;line-height:24px;font-size:16.5px;color:#1b2038;left:1535.20px;letter-spacing:0.882px;">David Martin</span>
<span id="t94" class="t" style="top:603.59px;height:24px;line-height:24px;font-size:15px;color:#5d6b8c;left:0.50px;left:324.3px;width:49px;text-align:center;letter-spacing:1.5px;">10</span>
<span id="t95" class="t" style="top:603.88px;height:24px;line-height:24px;font-size:16.5px;color:#1b2038;left:434.90px;letter-spacing:0.888px;">06. GA Launch</span>
<span id="t96" class="t" style="top:603.88px;height:24px;line-height:24px;font-size:16.5px;color:#1b2038;left:898.90px;letter-spacing:0.635px;">In Progress</span>
<span id="t97" class="t" style="top:603.88px;height:24px;line-height:24px;font-size:16.5px;color:#1b2038;right:612.31px;letter-spacing:1.692px;">08/02/2024</span>
<span id="t98" class="t" style="top:603.88px;height:24px;line-height:24px;font-size:16.5px;color:#df3842;right:450.96px;letter-spacing:1.637px;">08/02/2024</span>
<span id="t99" class="t" style="top:603.88px;height:24px;line-height:24px;font-size:16.5px;color:#1b2038;left:1370.00px;letter-spacing:0.780px;">Perform Custo...</span>
<span id="t100" class="t" style="top:603.88px;height:24px;line-height:24px;font-size:16.5px;color:#1b2038;left:1535.20px;letter-spacing:0.751px;">Lisa Simpson</span>
<span id="t101" class="t" style="top:643.91px;height:24px;line-height:24px;font-size:15px;color:#5d6b8c;left:0.50px;left:324.3px;width:49px;text-align:center;letter-spacing:1.5px;">11</span>
<span id="t102" class="t" style="top:644.21px;height:24px;line-height:24px;font-size:16.5px;color:#1b2038;left:434.90px;letter-spacing:0.357px;">TEST 2</span>
<span id="t103" class="t" style="top:644.21px;height:24px;line-height:24px;font-size:16.5px;color:#1b2038;left:898.90px;letter-spacing:1.155px;">New</span>
<span id="t104" class="t" style="top:644.21px;height:24px;line-height:24px;font-size:16.5px;color:#1b2038;right:612.31px;letter-spacing:1.692px;">06/05/2024</span>
<span id="t105" class="t" style="top:644.21px;height:24px;line-height:24px;font-size:16.5px;color:#df3842;right:450.96px;letter-spacing:1.637px;">23/05/2024</span>
<span id="t106" class="t" style="top:644.21px;height:24px;line-height:24px;font-size:16.5px;color:#1b2038;left:1370.00px;letter-spacing:0.907px;">Website Launch</span>
<span id="t107" class="t" style="top:684.25px;height:24px;line-height:24px;font-size:15px;color:#5d6b8c;left:0.50px;left:324.3px;width:49px;text-align:center;letter-spacing:1.5px;">12</span>
<span id="t108" class="t" style="top:684.54px;height:24px;line-height:24px;font-size:16.5px;color:#1b2038;left:434.90px;letter-spacing:0.277px;">TEST 1</span>
<span id="t109" class="t" style="top:684.54px;height:24px;line-height:24px;font-size:16.5px;color:#1b2038;left:898.90px;letter-spacing:1.155px;">New</span>
<span id="t110" class="t" style="top:684.54px;height:24px;line-height:24px;font-size:16.5px;color:#1b2038;right:612.31px;letter-spacing:1.692px;">06/05/2024</span>
<span id="t111" class="t" style="top:684.54px;height:24px;line-height:24px;font-size:16.5px;color:#df3842;right:450.96px;letter-spacing:1.637px;">17/05/2024</span>
<span id="t112" class="t" style="top:684.54px;height:24px;line-height:24px;font-size:16.5px;color:#1b2038;left:1370.00px;letter-spacing:0.907px;">Website Launch</span>
<span id="t113" class="t" style="top:724.58px;height:24px;line-height:24px;font-size:15px;color:#5d6b8c;left:0.50px;left:324.3px;width:49px;text-align:center;letter-spacing:1.5px;">13</span>
<span id="t114" class="t" style="top:724.88px;height:24px;line-height:24px;font-size:16.5px;color:#1b2038;left:434.90px;letter-spacing:0.851px;">External Communication</span>
<span id="t115" class="t" style="top:724.88px;height:24px;line-height:24px;font-size:16.5px;color:#1b2038;left:898.90px;letter-spacing:1.155px;">New</span>
<span id="t116" class="t" style="top:724.88px;height:24px;line-height:24px;font-size:16.5px;color:#1b2038;right:612.31px;letter-spacing:1.692px;">22/03/2024</span>
<span id="t117" class="t" style="top:724.88px;height:24px;line-height:24px;font-size:16.5px;color:#df3842;right:450.96px;letter-spacing:1.637px;">08/04/2024</span>
<span id="t118" class="t" style="top:724.88px;height:24px;line-height:24px;font-size:16.5px;color:#1b2038;left:1370.00px;letter-spacing:0.709px;">Website Launch...</span>
<span id="t119" class="t" style="top:764.90px;height:24px;line-height:24px;font-size:15px;color:#5d6b8c;left:0.50px;left:324.3px;width:49px;text-align:center;letter-spacing:1.5px;">14</span>
<span id="t120" class="t" style="top:765.20px;height:24px;line-height:24px;font-size:16.5px;color:#1b2038;left:434.90px;letter-spacing:0.718px;">03. External Research</span>
<span id="t121" class="t" style="top:765.20px;height:24px;line-height:24px;font-size:16.5px;color:#1b2038;left:898.90px;letter-spacing:1.155px;">New</span>
<span id="t122" class="t" style="top:765.20px;height:24px;line-height:24px;font-size:16.5px;color:#1b2038;right:612.31px;letter-spacing:1.692px;">08/02/2024</span>
<span id="t123" class="t" style="top:765.20px;height:24px;line-height:24px;font-size:16.5px;color:#1b2038;left:1370.00px;letter-spacing:0.709px;">Website Launch...</span>
<span id="t124" class="t" style="top:765.20px;height:24px;line-height:24px;font-size:16.5px;color:#1b2038;left:1535.20px;letter-spacing:0.882px;">David Martin</span>
<span id="t125" class="t" style="top:805.24px;height:24px;line-height:24px;font-size:15px;color:#5d6b8c;left:0.50px;left:324.3px;width:49px;text-align:center;letter-spacing:1.5px;">15</span>
<span id="t126" class="t" style="top:805.53px;height:24px;line-height:24px;font-size:16.5px;color:#1b2038;left:434.90px;letter-spacing:0.775px;">Review with Digital Team</span>
<span id="t127" class="t" style="top:805.53px;height:24px;line-height:24px;font-size:16.5px;color:#1b2038;left:898.90px;letter-spacing:0.635px;">In Progress</span>
<span id="t128" class="t" style="top:805.53px;height:24px;line-height:24px;font-size:16.5px;color:#1b2038;right:612.31px;letter-spacing:1.692px;">04/03/2024</span>
<span id="t129" class="t" style="top:805.53px;height:24px;line-height:24px;font-size:16.5px;color:#1b2038;left:1370.00px;letter-spacing:0.643px;">Step 1: Quick S...</span>
<span id="t130" class="t" style="top:845.57px;height:24px;line-height:24px;font-size:15px;color:#5d6b8c;left:0.50px;left:324.3px;width:49px;text-align:center;letter-spacing:1.5px;">16</span>
<span id="t131" class="t" style="top:845.87px;height:24px;line-height:24px;font-size:16.5px;color:#1b2038;left:434.90px;letter-spacing:0.918px;">Weekly Meeting Template</span>
<span id="t132" class="t" style="top:845.87px;height:24px;line-height:24px;font-size:16.5px;color:#1b2038;left:898.90px;letter-spacing:0.918px;">Scheduled</span>
<span id="t133" class="t" style="top:845.87px;height:24px;line-height:24px;font-size:16.5px;color:#1b2038;right:612.31px;letter-spacing:1.692px;">27/05/2024</span>
<span id="t134" class="t" style="top:845.87px;height:24px;line-height:24px;font-size:16.5px;color:#1b2038;left:1370.00px;letter-spacing:0.990px;">Templates</span>
<span id="t135" class="t" style="top:845.87px;height:24px;line-height:24px;font-size:16.5px;color:#1b2038;left:1535.20px;letter-spacing:0.627px;">Amy White, Julia ...</span>
<span id="t136" class="t" style="top:885.89px;height:24px;line-height:24px;font-size:15px;color:#5d6b8c;left:0.50px;left:324.3px;width:49px;text-align:center;letter-spacing:1.5px;">17</span>
<span id="t137" class="t" style="top:886.19px;height:24px;line-height:24px;font-size:16.5px;color:#1b2038;left:434.90px;letter-spacing:0.909px;">Workspace Configuration 3</span>
<span id="t138" class="t" style="top:886.19px;height:24px;line-height:24px;font-size:16.5px;color:#1b2038;left:898.90px;letter-spacing:0.595px;">To Be Schedu...</span>
<span id="t139" class="t" style="top:886.19px;height:24px;line-height:24px;font-size:16.5px;color:#1b2038;right:612.31px;letter-spacing:1.692px;">04/01/2024</span>
<span id="t140" class="t" style="top:886.19px;height:24px;line-height:24px;font-size:16.5px;color:#df3842;right:450.96px;letter-spacing:1.637px;">22/03/2024</span>
<span id="t141" class="t" style="top:886.19px;height:24px;line-height:24px;font-size:16.5px;color:#1b2038;left:1370.00px;letter-spacing:0.581px;">Enterprise D De...</span>
<span id="t142" class="t" style="top:926.23px;height:24px;line-height:24px;font-size:15px;color:#5d6b8c;left:0.50px;left:324.3px;width:49px;text-align:center;letter-spacing:1.5px;">18</span>
<span id="t143" class="t" style="top:926.52px;height:24px;line-height:24px;font-size:16.5px;color:#1b2038;left:434.90px;letter-spacing:0.909px;">Workspace Configuration 3</span>
<span id="t144" class="t" style="top:926.52px;height:24px;line-height:24px;font-size:16.5px;color:#1b2038;left:898.90px;letter-spacing:0.595px;">To Be Schedu...</span>
<span id="t145" class="t" style="top:926.52px;height:24px;line-height:24px;font-size:16.5px;color:#1b2038;right:612.31px;letter-spacing:1.692px;">04/01/2024</span>
<span id="t146" class="t" style="top:926.52px;height:24px;line-height:24px;font-size:16.5px;color:#df3842;right:450.96px;letter-spacing:1.637px;">22/03/2024</span>
<span id="t147" class="t" style="top:926.52px;height:24px;line-height:24px;font-size:16.5px;color:#1b2038;left:1370.00px;letter-spacing:0.550px;">Pinnacle D Depl...</span>
<span id="t148" class="t" style="top:966.56px;height:24px;line-height:24px;font-size:15px;color:#5d6b8c;left:0.50px;left:324.3px;width:49px;text-align:center;letter-spacing:1.5px;">19</span>
<span id="t149" class="t" style="top:966.86px;height:24px;line-height:24px;font-size:16.5px;color:#1b2038;left:434.90px;letter-spacing:0.909px;">Workspace Configuration 2</span>
<span id="t150" class="t" style="top:966.86px;height:24px;line-height:24px;font-size:16.5px;color:#1b2038;left:898.90px;letter-spacing:0.595px;">To Be Schedu...</span>
<span id="t151" class="t" style="top:966.86px;height:24px;line-height:24px;font-size:16.5px;color:#1b2038;right:612.31px;letter-spacing:1.692px;">04/01/2024</span>
<span id="t152" class="t" style="top:966.86px;height:24px;line-height:24px;font-size:16.5px;color:#df3842;right:450.96px;letter-spacing:1.637px;">20/03/2024</span>
<span id="t153" class="t" style="top:966.86px;height:24px;line-height:24px;font-size:16.5px;color:#1b2038;left:1370.00px;letter-spacing:0.581px;">Enterprise D De...</span>
</div>
<span id="t154" class="t" style="top:442.56px;height:24px;line-height:24px;font-size:16.5px;color:#1b2038;left:1798.30px;">1</span>
<span id="t155" class="t" style="top:684.54px;height:24px;line-height:24px;font-size:16.5px;color:#1b2038;left:1798.30px;">1</span>
<span id="t156" class="t" style="top:240.61px;height:24px;line-height:24px;font-size:15px;color:#5d6b8c;left:0.50px;left:323.6px;width:49px;text-align:center;">1</span>
<svg class="b" style="left:382.00px;top:250.60px;" width="12" height="8" viewBox="0 0 12 8" fill="none"><path d="M1 1 6 6.200 11 1" stroke="#2a3150" stroke-width="1.4" stroke-linecap="round" stroke-linejoin="round"/></svg>
<span id="t157" class="t" style="top:241.72px;height:24px;line-height:24px;font-size:14.9px;color:#10142a;left:407.20px;letter-spacing:1.595px;-webkit-text-stroke:0.65px #10142a;">All active</span>
<span id="t158" class="t" style="top:241.31px;height:24px;line-height:24px;font-size:16.5px;color:#5d6b8c;right:952.50px;letter-spacing:1.797px;">566</span>
<span id="t159" class="t" style="top:241.22px;height:24px;line-height:24px;font-size:11.8px;color:#1b2038;left:1208.80px;letter-spacing:1.656px;-webkit-text-stroke:0.3px #1b2038;">MAX</span>
<span id="t160" class="t" style="top:241.31px;height:24px;line-height:24px;font-size:16.5px;color:#1b2038;right:450.96px;letter-spacing:1.637px;">14/10/2024</span>
<span id="t161" class="t" style="top:241.22px;height:24px;line-height:24px;font-size:11.8px;color:#1b2038;left:1711.80px;letter-spacing:1.186px;-webkit-text-stroke:0.3px #1b2038;">SUM</span>
<span id="t162" class="t" style="top:241.31px;height:24px;line-height:24px;font-size:16.5px;color:#1b2038;left:1775.00px;letter-spacing:1.147px;">265</span>
<svg class="b" style="left:0;top:0" width="1802" height="1023" viewBox="0 0 1802 1023"><rect x="869.70" y="284.05" width="17.40" height="17.60" fill="#9c27b0" rx="4"/><rect x="869.70" y="324.38" width="17.40" height="17.60" fill="#9c27b0" rx="4"/><rect x="869.70" y="364.70" width="17.40" height="17.60" fill="#ff9800" rx="4"/><rect x="869.70" y="405.04" width="17.40" height="17.60" fill="#ff9800" rx="4"/><rect x="869.70" y="445.37" width="17.40" height="17.60" fill="#ffeb3b" rx="4"/><rect x="869.70" y="485.69" width="17.40" height="17.60" fill="#ffeb3b" rx="4"/><rect x="869.70" y="526.02" width="17.40" height="17.60" fill="#ffeb3b" rx="4"/><rect x="869.70" y="566.36" width="17.40" height="17.60" fill="#ffeb3b" rx="4"/><rect x="869.70" y="606.68" width="17.40" height="17.60" fill="#ffeb3b" rx="4"/><rect x="869.70" y="647.01" width="17.40" height="17.60" fill="#00bcd4" rx="4"/><rect x="869.70" y="687.34" width="17.40" height="17.60" fill="#00bcd4" rx="4"/><rect x="869.70" y="727.67" width="17.40" height="17.60" fill="#00bcd4" rx="4"/><rect x="869.70" y="768.00" width="17.40" height="17.60" fill="#00bcd4" rx="4"/><rect x="869.70" y="808.33" width="17.40" height="17.60" fill="#9c27b0" rx="4"/><rect x="869.70" y="848.66" width="17.40" height="17.60" fill="#009688" rx="4"/><rect x="869.70" y="888.99" width="17.40" height="17.60" fill="#ff9800" rx="4"/><rect x="869.70" y="929.32" width="17.40" height="17.60" fill="#ff9800" rx="4"/><rect x="869.70" y="969.65" width="17.40" height="17.60" fill="#ff9800" rx="4"/><rect x="323.50" y="272.03" width="1477.30" height="1.10" fill="#e3e7f0"/><rect x="323.50" y="312.36" width="1477.30" height="1.10" fill="#e3e7f0"/><rect x="323.50" y="352.69" width="1477.30" height="1.10" fill="#e3e7f0"/><rect x="323.50" y="393.02" width="1477.30" height="1.10" fill="#e3e7f0"/><rect x="323.50" y="433.35" width="1477.30" height="1.10" fill="#e3e7f0"/><rect x="323.50" y="473.68" width="1477.30" height="1.10" fill="#e3e7f0"/><rect x="323.50" y="514.01" width="1477.30" height="1.10" fill="#e3e7f0"/><rect x="323.50" y="554.34" width="1477.30" height="1.10" fill="#e3e7f0"/><rect x="323.50" y="594.67" width="1477.30" height="1.10" fill="#e3e7f0"/><rect x="323.50" y="635.00" width="1477.30" height="1.10" fill="#e3e7f0"/><rect x="323.50" y="675.33" width="1477.30" height="1.10" fill="#e3e7f0"/><rect x="323.50" y="715.66" width="1477.30" height="1.10" fill="#e3e7f0"/><rect x="323.50" y="755.99" width="1477.30" height="1.10" fill="#e3e7f0"/><rect x="323.50" y="796.32" width="1477.30" height="1.10" fill="#e3e7f0"/><rect x="323.50" y="836.65" width="1477.30" height="1.10" fill="#e3e7f0"/><rect x="323.50" y="876.98" width="1477.30" height="1.10" fill="#e3e7f0"/><rect x="323.50" y="917.31" width="1477.30" height="1.10" fill="#e3e7f0"/><rect x="323.50" y="957.64" width="1477.30" height="1.10" fill="#e3e7f0"/><rect x="323.50" y="231.60" width="1477.30" height="1.30" fill="#e3e7f0"/><rect x="372.85" y="192.50" width="1.30" height="788.00" fill="#e3e7f0"/><rect x="856.85" y="192.50" width="1.30" height="788.00" fill="#e3e7f0"/><rect x="1035.60" y="192.50" width="1.30" height="788.00" fill="#e3e7f0"/><rect x="1196.95" y="192.50" width="1.30" height="788.00" fill="#e3e7f0"/><rect x="1358.45" y="192.50" width="1.30" height="788.00" fill="#e3e7f0"/><rect x="1523.65" y="192.50" width="1.30" height="788.00" fill="#e3e7f0"/><rect x="1699.75" y="192.50" width="1.30" height="788.00" fill="#e3e7f0"/></svg>
<div class="b" style="left:323.50px;top:980.50px;width:1477.30px;height:40.70px;background:#fff;border-radius:0 0 10px 0;box-shadow:0 -1px 3px rgba(40,50,90,.08);background:linear-gradient(#fff 0,#fff 25%,#ebebec 100%);"></div>
<svg class="b" style="left:0;top:0" width="1802" height="1023" viewBox="0 0 1802 1023"><rect x="323.50" y="980.30" width="1477.30" height="1.30" fill="#e1e5ee"/><rect x="372.85" y="981.00" width="1.30" height="40.20" fill="#e3e7f0"/><rect x="856.85" y="981.00" width="1.30" height="40.20" fill="#e3e7f0"/><rect x="1035.60" y="981.00" width="1.30" height="40.20" fill="#e3e7f0"/><rect x="1196.95" y="981.00" width="1.30" height="40.20" fill="#e3e7f0"/><rect x="1358.45" y="981.00" width="1.30" height="40.20" fill="#e3e7f0"/><rect x="1523.65" y="981.00" width="1.30" height="40.20" fill="#e3e7f0"/><rect x="1699.75" y="981.00" width="1.30" height="40.20" fill="#e3e7f0"/></svg>
<span id="t163" class="t" style="top:989.80px;height:24px;line-height:24px;font-size:16.5px;color:#1b2038;left:384.90px;letter-spacing:0.958px;">Total: 566 tasks</span>
<span id="t164" class="t" style="top:990.10px;height:24px;line-height:24px;font-size:11.8px;color:#1b2038;left:1208.80px;letter-spacing:1.656px;-webkit-text-stroke:0.3px #1b2038;">MAX</span>
<span id="t165" class="t" style="top:989.80px;height:24px;line-height:24px;font-size:16.5px;color:#1b2038;right:450.96px;letter-spacing:1.637px;">14/10/2024</span>
<span id="t166" class="t" style="top:990.10px;height:24px;line-height:24px;font-size:11.8px;color:#1b2038;left:1711.80px;letter-spacing:1.186px;-webkit-text-stroke:0.3px #1b2038;">SUM</span>
<span id="t167" class="t" style="top:989.80px;height:24px;line-height:24px;font-size:16.5px;color:#1b2038;left:1775.00px;letter-spacing:1.147px;">265</span>
<div class="b" style="left:275.80px;top:132.90px;width:67.20px;height:67.20px;background:rgba(8,207,101,.2);border-radius:40px;"></div>
<div class="b" style="left:286.20px;top:143.30px;width:46.40px;height:46.40px;background:#08cf65;border-radius:30px;"></div>
<span id="t168" class="t" style="top:150.80px;height:30px;line-height:30px;font-size:25.5px;color:#fff;font-weight:700;left:0.50px;left:289.40px;width:40px;text-align:center;">2</span>
<div class="b" style="left:704.10px;top:191.15px;width:67.20px;height:67.20px;background:rgba(8,207,101,.2);border-radius:40px;"></div>
<div class="b" style="left:714.50px;top:201.55px;width:46.40px;height:46.40px;background:#08cf65;border-radius:30px;"></div>
<span id="t169" class="t" style="top:209.05px;height:30px;line-height:30px;font-size:25.5px;color:#fff;font-weight:700;left:0.50px;left:717.70px;width:40px;text-align:center;">3</span>
<div class="b" style="left:961.90px;top:191.15px;width:67.20px;height:67.20px;background:rgba(8,207,101,.2);border-radius:40px;"></div>
<div class="b" style="left:972.30px;top:201.55px;width:46.40px;height:46.40px;background:#08cf65;border-radius:30px;"></div>
<span id="t170" class="t" style="top:209.05px;height:30px;line-height:30px;font-size:25.5px;color:#fff;font-weight:700;left:0.50px;left:975.50px;width:40px;text-align:center;">1</span>
<div class="b" style="left:308.15px;top:245.15px;width:67.20px;height:67.20px;background:rgba(8,207,101,.2);border-radius:40px;"></div>
<div class="b" style="left:318.55px;top:255.55px;width:46.40px;height:46.40px;background:#08cf65;border-radius:30px;"></div>
<span id="t171" class="t" style="top:263.05px;height:30px;line-height:30px;font-size:25.5px;color:#fff;font-weight:700;left:0.50px;left:321.75px;width:40px;text-align:center;">4</span>
<svg class="b" style="left:335.90px;top:137.00px;" width="55.70" height="57.60" viewBox="0 0 55.70 57.60" fill="none"><path d="M9.40 1.00H46.30A8.40 8.40 0 0 1 54.70 9.40V48.20A8.40 8.40 0 0 1 46.30 56.60H9.40A8.40 8.40 0 0 1 1.00 48.20V9.40A8.40 8.40 0 0 1 9.40 1.00ZM14.85 7.05H40.85A7.80 7.80 0 0 1 48.65 14.85V42.75A7.80 7.80 0 0 1 40.85 50.55H14.85A7.80 7.80 0 0 1 7.05 42.75V14.85A7.80 7.80 0 0 1 14.85 7.05Z" fill="#08cf65" fill-rule="evenodd"/></svg>
<svg class="b" style="left:634.00px;top:137.00px;" width="202.60" height="58.90" viewBox="0 0 202.60 58.90" fill="none"><path d="M9.40 1.00H193.20A8.40 8.40 0 0 1 201.60 9.40V49.50A8.40 8.40 0 0 1 193.20 57.90H9.40A8.40 8.40 0 0 1 1.00 49.50V9.40A8.40 8.40 0 0 1 9.40 1.00ZM14.85 7.05H187.75A7.80 7.80 0 0 1 195.55 14.85V44.05A7.80 7.80 0 0 1 187.75 51.85H14.85A7.80 7.80 0 0 1 7.05 44.05V14.85A7.80 7.80 0 0 1 14.85 7.05Z" fill="#08cf65" fill-rule="evenodd"/></svg>
<svg class="b" style="left:850.90px;top:137.00px;" width="206.10" height="59.50" viewBox="0 0 206.10 59.50" fill="none"><path d="M9.40 1.00H196.70A8.40 8.40 0 0 1 205.10 9.40V50.10A8.40 8.40 0 0 1 196.70 58.50H9.40A8.40 8.40 0 0 1 1.00 50.10V9.40A8.40 8.40 0 0 1 9.40 1.00ZM14.85 7.05H191.25A7.80 7.80 0 0 1 199.05 14.85V44.65A7.80 7.80 0 0 1 191.25 52.45H14.85A7.80 7.80 0 0 1 7.05 44.65V14.85A7.80 7.80 0 0 1 14.85 7.05Z" fill="#08cf65" fill-rule="evenodd"/></svg>
<svg class="b" style="left:362.75px;top:229.00px;" width="45.75" height="46.75" viewBox="0 0 45.75 46.75" fill="none"><path d="M9.40 1.00H36.35A8.40 8.40 0 0 1 44.75 9.40V37.35A8.40 8.40 0 0 1 36.35 45.75H9.40A8.40 8.40 0 0 1 1.00 37.35V9.40A8.40 8.40 0 0 1 9.40 1.00ZM14.85 7.05H30.90A7.80 7.80 0 0 1 38.70 14.85V31.90A7.80 7.80 0 0 1 30.90 39.70H14.85A7.80 7.80 0 0 1 7.05 31.90V14.85A7.80 7.80 0 0 1 14.85 7.05Z" fill="#08cf65" fill-rule="evenodd"/></svg>
<div class="b" style="left:1800.8px;top:0;width:1.2px;height:1023px;background:#111"></div>
</div>
</body></html>
